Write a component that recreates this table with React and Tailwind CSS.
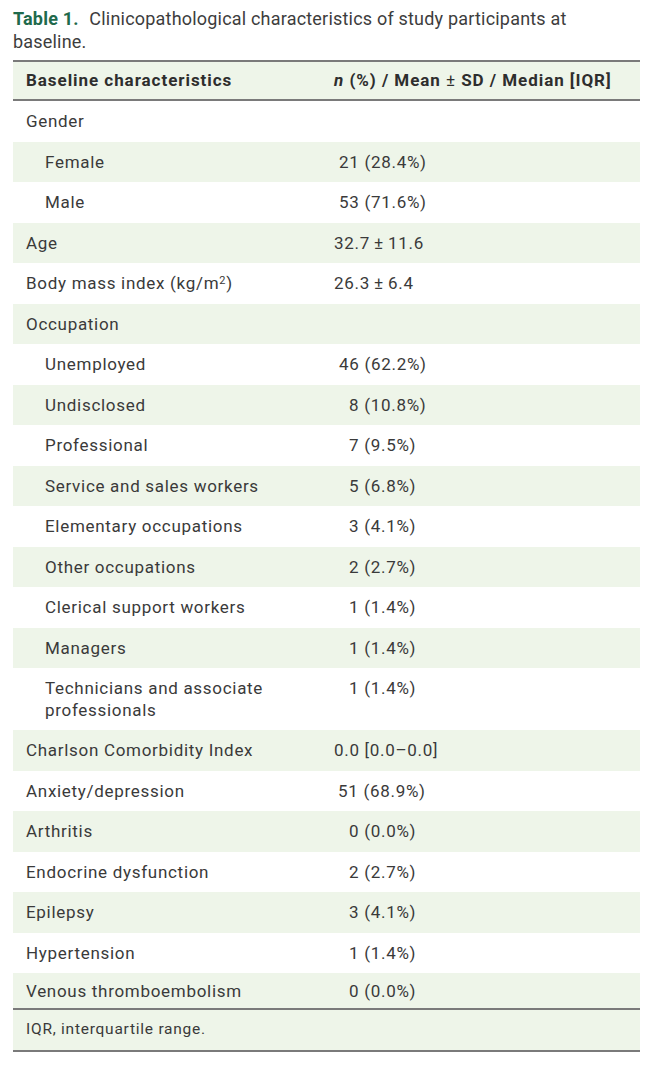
import React from "react";

const rows = [
  { label: "Gender", level: 0, value: "", pad: "pl-0", shade: false },
  { label: "Female", level: 1, value: "21 (28.4%)", pad: "pl-[5px]", shade: true },
  { label: "Male", level: 1, value: "53 (71.6%)", pad: "pl-[5px]", shade: false },
  { label: "Age", level: 0, value: "32.7\u2009±\u200911.6", pad: "pl-0", shade: true },
  { label: "BMI", level: 0, value: "26.3\u2009±\u20096.4", pad: "pl-0", shade: false },
  { label: "Occupation", level: 0, value: "", pad: "pl-0", shade: true },
  { label: "Unemployed", level: 1, value: "46 (62.2%)", pad: "pl-[5px]", shade: false },
  { label: "Undisclosed", level: 1, value: "8 (10.8%)", pad: "pl-[15px]", shade: true },
  { label: "Professional", level: 1, value: "7 (9.5%)", pad: "pl-[15px]", shade: false },
  { label: "Service and sales workers", level: 1, value: "5 (6.8%)", pad: "pl-[15px]", shade: true },
  { label: "Elementary occupations", level: 1, value: "3 (4.1%)", pad: "pl-[15px]", shade: false },
  { label: "Other occupations", level: 1, value: "2 (2.7%)", pad: "pl-[15px]", shade: true },
  { label: "Clerical support workers", level: 1, value: "1 (1.4%)", pad: "pl-[15px]", shade: false },
  { label: "Managers", level: 1, value: "1 (1.4%)", pad: "pl-[15px]", shade: true },
  { label: "Technicians and associate professionals", level: 1, value: "1 (1.4%)", pad: "pl-[15px]", shade: false, tall: true },
  { label: "Charlson Comorbidity Index", level: 0, value: "0.0 [0.0–0.0]", pad: "pl-0", shade: true },
  { label: "Anxiety/depression", level: 0, value: "51 (68.9%)", pad: "pl-[4px]", shade: false },
  { label: "Arthritis", level: 0, value: "0 (0.0%)", pad: "pl-[15px]", shade: true },
  { label: "Endocrine dysfunction", level: 0, value: "2 (2.7%)", pad: "pl-[15px]", shade: false },
  { label: "Epilepsy", level: 0, value: "3 (4.1%)", pad: "pl-[15px]", shade: true },
  { label: "Hypertension", level: 0, value: "1 (1.4%)", pad: "pl-[15px]", shade: false },
  { label: "Venous thromboembolism", level: 0, value: "0 (0.0%)", pad: "pl-[15px]", shade: true, short: true },
];

function Label({ row }) {
  if (row.label === "BMI") {
    return (
      <span>
        Body mass index (kg/m<sup className="text-[11px]">2</sup>)
      </span>
    );
  }
  return <span>{row.label}</span>;
}

export default function App() {
  return (
    <div className="w-[653px] min-h-[1072px] bg-white font-['Roboto',sans-serif] text-[#3a3a3a]">
      <div className="px-[13px] pt-[7px]">
        <p className="text-[18px] leading-[23px] tracking-[0.2px] text-[#3d3d3d]">
          <span className="mr-[6px] font-bold text-[#1f6a4c]">Table 1.</span> Clinicopathological characteristics of study participants at baseline.
        </p>

        <div className="mt-[7px] w-[627px]">
          <div className="flex h-[41px] items-center border-y-2 border-[#7a7a7a] bg-[#eef5e9] text-[17px] font-bold tracking-[0.95px] text-[#2e2e2e]">
            <div className="w-[321px] pl-[13px]">Baseline characteristics</div>
            <div className="flex-1 whitespace-nowrap">
              <span className="italic">n</span> (%) / Mean <span className="font-normal">±</span> SD / Median [IQR]
            </div>
          </div>

          {rows.map((row, i) => (
            <div
              key={i}
              className={
                "flex text-[17px] tracking-[0.7px] " +
                (row.shade ? "bg-[#eef5e9] " : "bg-white ") +
                (row.tall
                  ? "h-[62px] items-start pt-[9px] leading-[22px]"
                  : row.short
                  ? "h-[35px] items-center leading-[22px]"
                  : "h-[40.5px] items-center leading-[22px]")
              }
            >
              <div className={"w-[321px] " + (row.level === 1 ? "pl-[32px] pr-[60px]" : "pl-[13px]")}>
                <Label row={row} />
              </div>
              <div className={"flex-1 " + row.pad}>{row.value}</div>
            </div>
          ))}

          <div className="flex h-[44px] items-center border-y-2 border-[#7a7a7a] bg-[#eef5e9] pl-[13px] text-[15.5px] tracking-[0.75px] text-[#3a3a3a]">
            IQR, interquartile range.
          </div>
        </div>
      </div>
    </div>
  );
}
